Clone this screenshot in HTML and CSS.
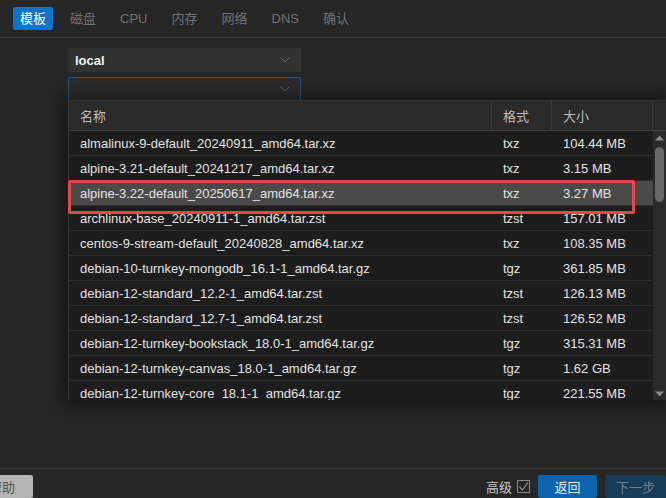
FILE: index.html
```html
<!DOCTYPE html>
<html lang="zh">
<head>
<meta charset="utf-8">
<link rel="stylesheet" href="styles.css">
</head>
<body>
<div class="app">
  <nav class="tabs">
    <span class="tab active">模板</span>
    <span class="tab">磁盘</span>
    <span class="tab">CPU</span>
    <span class="tab">内存</span>
    <span class="tab">网络</span>
    <span class="tab">DNS</span>
    <span class="tab">确认</span>
  </nav>
  <main class="main">
    <div class="select">
      <span class="select-value">local</span>
      <svg class="chev" width="10" height="6" viewBox="0 0 10 6"><path d="M0.5 0.5 L5 5 L9.5 0.5" fill="none" stroke="#666" stroke-width="1"/></svg>
    </div>
    <div class="select focused">
      <span class="select-value"></span>
      <svg class="chev" width="10" height="6" viewBox="0 0 10 6"><path d="M0.5 0.5 L5 5 L9.5 0.5" fill="none" stroke="#666" stroke-width="1"/></svg>
    </div>
  </main>
  <footer class="footer">
    <button class="btn help">帮助</button>
    <div class="spacer"></div>
    <label class="adv">高级
      <span class="check"><svg width="11" height="11" viewBox="0 0 11 11"><path d="M1.5 6 L4.5 9 L10 1.5" fill="none" stroke="#9a9a9a" stroke-width="1.1"/></svg></span>
    </label>
    <button class="btn primary">返回</button>
    <button class="btn disabled">下一步</button>
  </footer>

  <div class="picker">
    <div class="thead">
      <div class="th c-name">名称</div>
      <div class="th c-fmt">格式</div>
      <div class="th c-size">大小</div>
      <div class="th c-sb"></div>
    </div>
    <div class="tbody">
      <div class="rows">
        <div class="row"><div class="c-name">almalinux-9-default_20240911_amd64.tar.xz</div><div class="c-fmt">txz</div><div class="c-size">104.44 MB</div></div>
        <div class="row"><div class="c-name">alpine-3.21-default_20241217_amd64.tar.xz</div><div class="c-fmt">txz</div><div class="c-size">3.15 MB</div></div>
        <div class="row selected"><div class="c-name">alpine-3.22-default_20250617_amd64.tar.xz</div><div class="c-fmt">txz</div><div class="c-size">3.27 MB</div></div>
        <div class="row"><div class="c-name">archlinux-base_20240911-1_amd64.tar.zst</div><div class="c-fmt">tzst</div><div class="c-size">157.01 MB</div></div>
        <div class="row"><div class="c-name">centos-9-stream-default_20240828_amd64.tar.xz</div><div class="c-fmt">txz</div><div class="c-size">108.35 MB</div></div>
        <div class="row"><div class="c-name">debian-10-turnkey-mongodb_16.1-1_amd64.tar.gz</div><div class="c-fmt">tgz</div><div class="c-size">361.85 MB</div></div>
        <div class="row"><div class="c-name">debian-12-standard_12.2-1_amd64.tar.zst</div><div class="c-fmt">tzst</div><div class="c-size">126.13 MB</div></div>
        <div class="row"><div class="c-name">debian-12-standard_12.7-1_amd64.tar.zst</div><div class="c-fmt">tzst</div><div class="c-size">126.52 MB</div></div>
        <div class="row"><div class="c-name">debian-12-turnkey-bookstack_18.0-1_amd64.tar.gz</div><div class="c-fmt">tgz</div><div class="c-size">315.31 MB</div></div>
        <div class="row"><div class="c-name">debian-12-turnkey-canvas_18.0-1_amd64.tar.gz</div><div class="c-fmt">tgz</div><div class="c-size">1.62 GB</div></div>
        <div class="row"><div class="c-name">debian-12-turnkey-core_18.1-1_amd64.tar.gz</div><div class="c-fmt">tgz</div><div class="c-size">221.55 MB</div></div>
      </div>
      <div class="scrollbar">
        <svg class="arrow" width="9" height="6" viewBox="0 0 9 6"><path d="M0 5.5 L4.5 0.5 L9 5.5 Z" fill="#8a8a8a"/></svg>
        <div class="thumb"></div>
        <div class="track-rest"></div>
        <svg class="arrow" width="9" height="6" viewBox="0 0 9 6"><path d="M0 0.5 L4.5 5.5 L9 0.5 Z" fill="#8a8a8a"/></svg>
      </div>
    </div>
    <div class="highlight"></div>
  </div>
</div>
</body>
</html>
```

FILE: styles.css
```css
* { box-sizing: border-box; }
html, body { margin: 0; padding: 0; }
body {
  background: #262626;
  color: #dedede;
  font-family: "Liberation Sans", Arial, "Noto Sans CJK SC", sans-serif;
  font-size: 13px;
  overflow: hidden;
}
.app {
  position: relative;
  width: 666px;
  height: 498px;
  display: flex;
  flex-direction: column;
}
.tabs {
  height: 38px;
  border-bottom: 1px solid #3b3b3b;
  display: flex;
  align-items: center;
  padding-left: 13px;
  padding-bottom: 1px;
}
.tab {
  padding: 0 7px;
  height: 23px;
  line-height: 23px;
  margin-right: 10px;
  color: #727272;
  font-size: 13px;
  border-radius: 2px;
}
.tab.active {
  background: #0e74c9;
  color: #fff;
}
.main {
  flex: 1;
  padding: 10px 0 0 68px;
  display: flex;
  flex-direction: column;
  gap: 5px;
}
.select {
  width: 233px;
  height: 24px;
  background: #323232;
  display: flex;
  align-items: center;
  padding: 0 6px 0 6px;
  border: 1px solid #323232;
}
.select.focused {
  background: #2c2c2c;
  border-color: #1a5688;
}
.select-value {
  flex: 1;
  color: #f2f2f2;
  font-weight: bold;
  font-size: 13px;
}
.chev { margin-right: 4px; }
.footer {
  height: 30px;
  border-top: 1px solid #3a3a3a;
  display: flex;
  align-items: flex-start;
  padding-top: 6px;
}
.spacer { flex: 1; }
.btn {
  height: 23px;
  border: none;
  border-radius: 2px;
  font-family: "Liberation Sans", "Noto Sans CJK SC", sans-serif;
  font-size: 13px;
  padding: 0;
}
.btn.help {
  width: 62px;
  margin-left: -29px;
  background: #b4b4b4;
  color: #555;
  text-align: center;
}
.adv {
  display: flex;
  align-items: center;
  color: #c8c8c8;
  margin-right: 8px;
  height: 23px;
}
.check {
  width: 13px;
  height: 13px;
  border: 1px solid #8a8a8a;
  margin-left: 5px;
  display: flex;
  align-items: center;
  justify-content: center;
}
.btn.primary {
  width: 59px;
  background: #0b64ab;
  color: #e8e8e8;
  margin-right: 8px;
}
.btn.disabled {
  width: 61px;
  background: #173c58;
  color: #6b7f90;
}
.picker {
  position: absolute;
  left: 68px;
  top: 100px;
  width: 598px;
  height: 300px;
  background: #1d1d1d;
  border-left: 1px solid #3a3a3a;
  box-shadow: 0 0 16px 5px rgba(0,0,0,0.45);
  display: flex;
  flex-direction: column;
}
.thead {
  height: 31px;
  display: flex;
  background: #2a2a2a;
  border-bottom: 1px solid #3e3e3e;
  border-top: 1px solid #333;
}
.th {
  color: #bdbdbd;
  display: flex;
  align-items: center;
  border-right: 1px solid #3a3a3a;
}
.th.c-sb { border-right: none; flex: 1; }
.c-name { width: 423px; padding-left: 11px; }
.c-fmt { width: 60px; padding-left: 11px; }
.c-size { width: 101px; padding-left: 11px; }
.tbody {
  flex: 1;
  display: flex;
  overflow: hidden;
}
.rows { width: 584px; }
.row {
  display: flex;
  height: 25px;
  align-items: center;
  border-bottom: 1px solid #2f2f2f;
  color: #e2e2e2;
  white-space: nowrap;
}
.row.selected { background: #4a4a4a; }
.scrollbar {
  flex: 1;
  background: #2a2a2a;
  display: flex;
  flex-direction: column;
  align-items: center;
  padding: 4px 0 3px;
}
.arrow { flex: none; }
.thumb {
  width: 9px;
  height: 55px;
  background: #676767;
  border-radius: 5px;
  margin-top: 6px;
}
.track-rest { flex: 1; }
.highlight {
  position: absolute;
  left: -1px;
  top: 80px;
  width: 567px;
  height: 34px;
  border: 3px solid #e4474b;
  border-radius: 2px;
}
```
